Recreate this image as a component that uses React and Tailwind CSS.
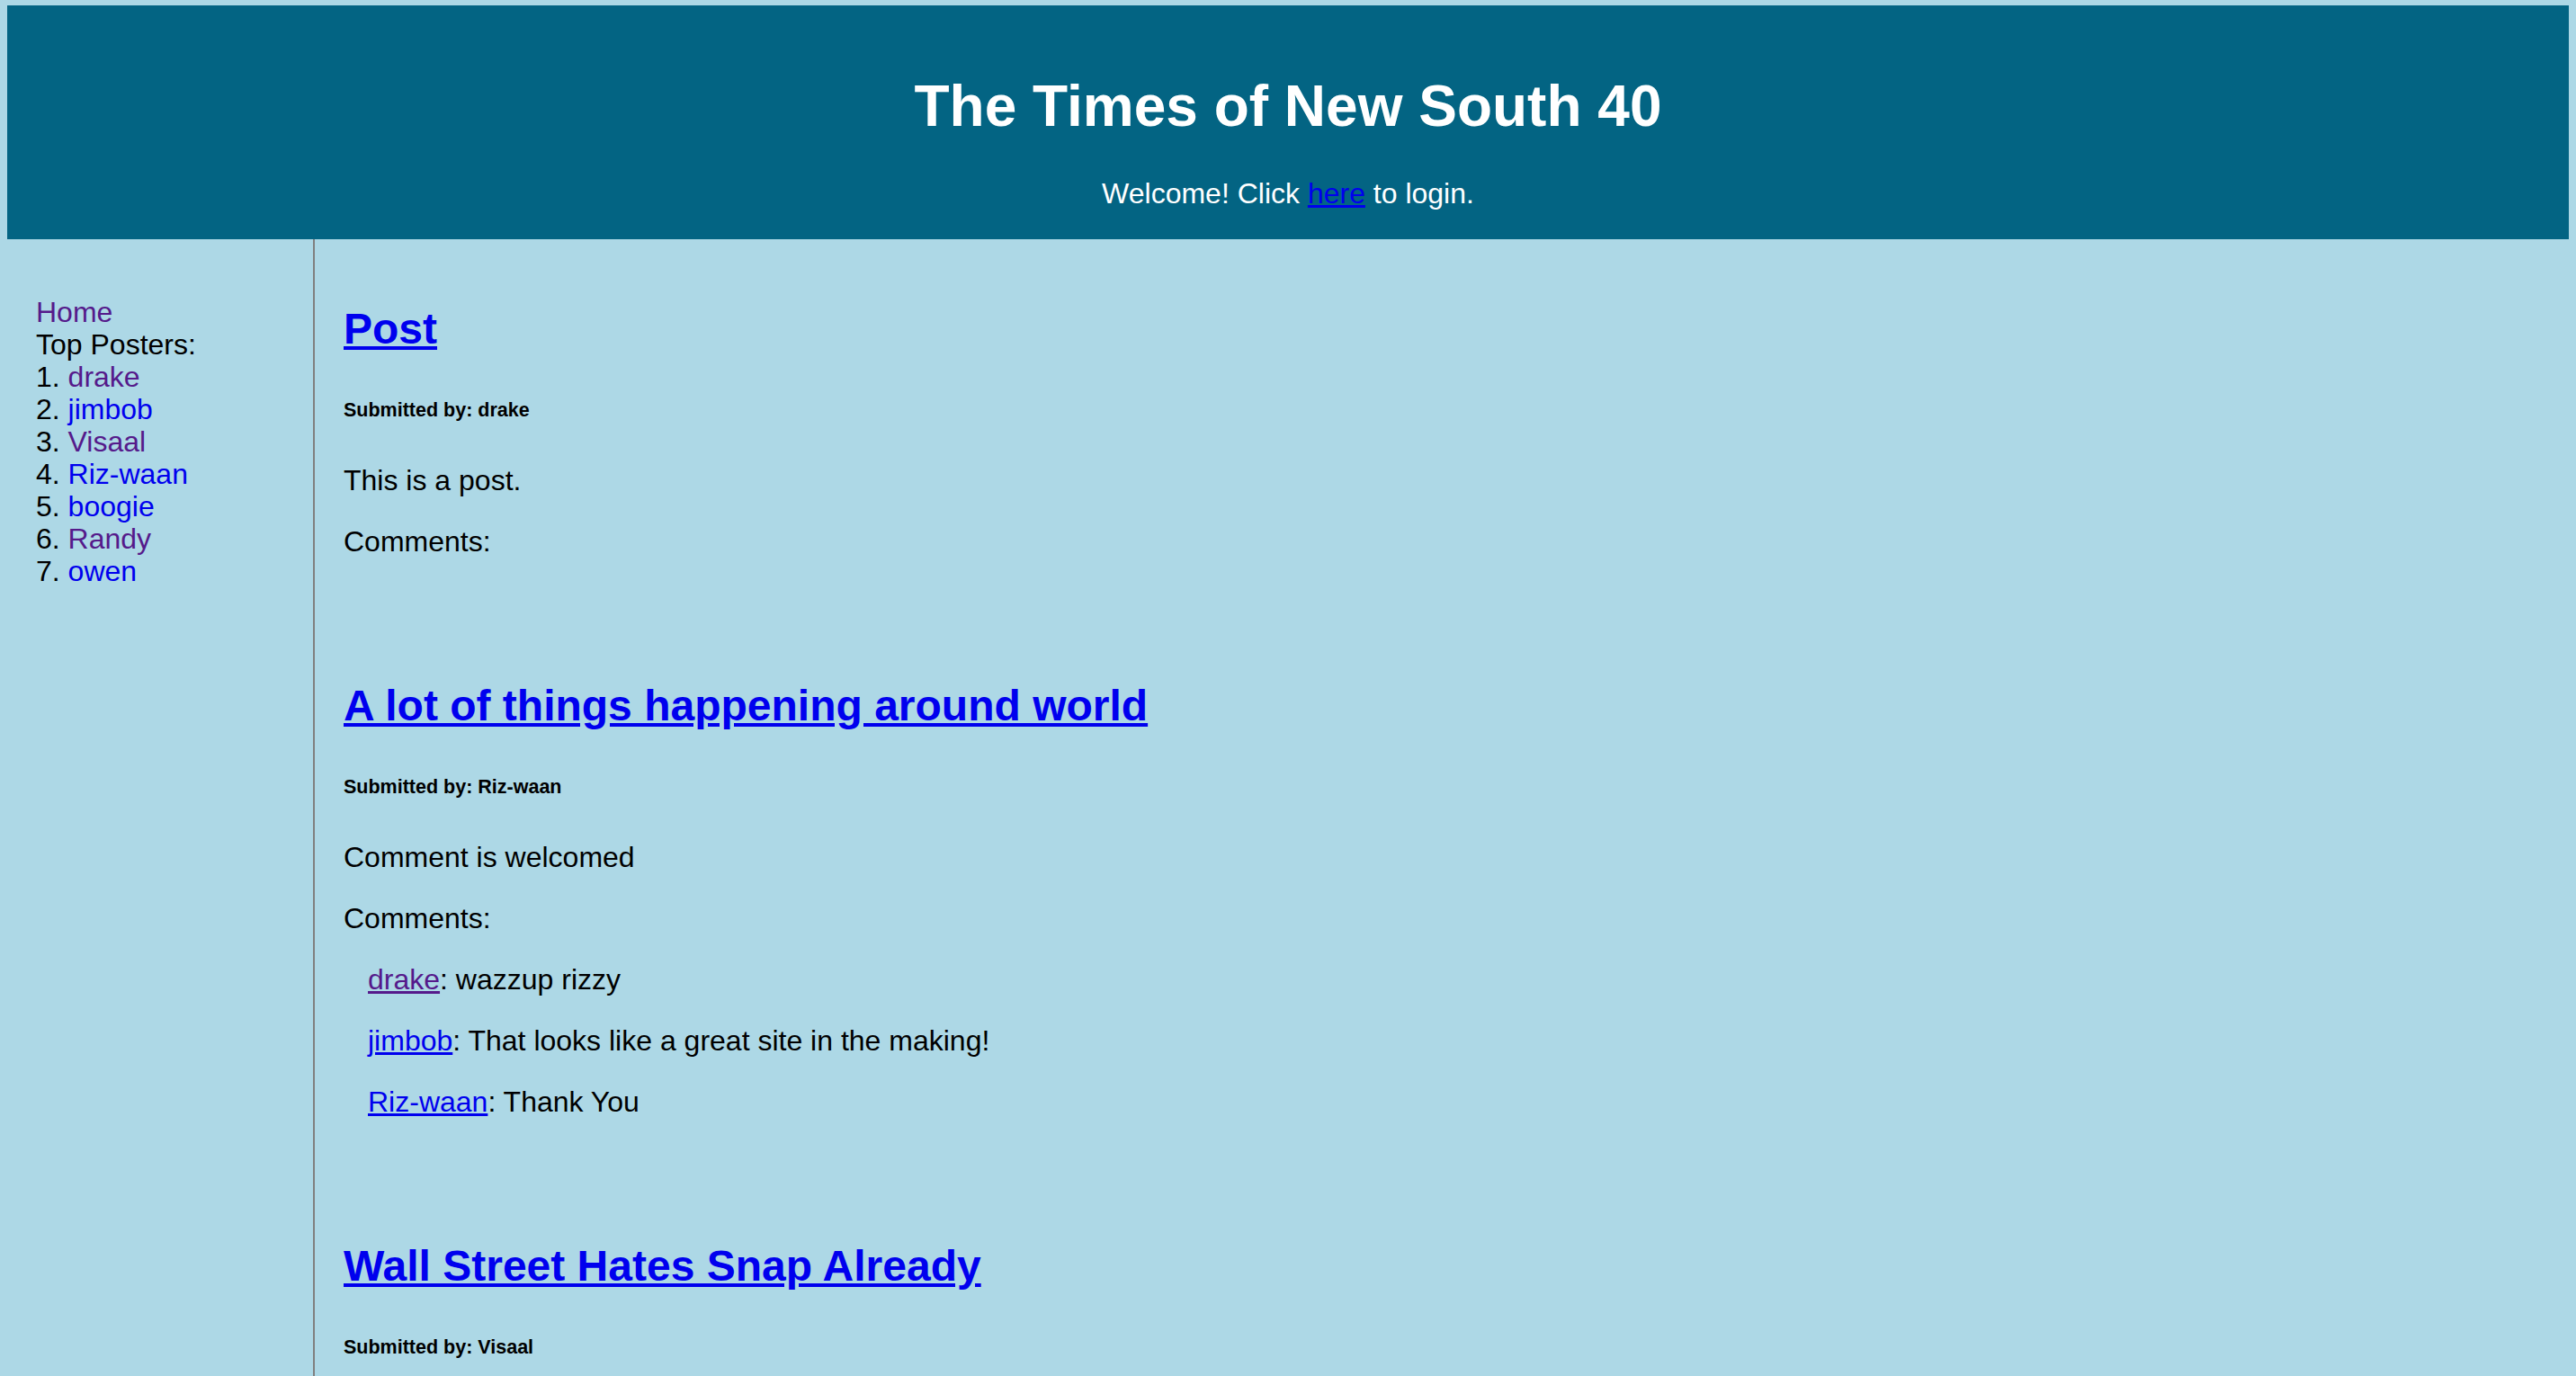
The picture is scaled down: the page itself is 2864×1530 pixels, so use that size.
import React from "react";

const posters = [
  { name: "drake", visited: true },
  { name: "jimbob", visited: false },
  { name: "Visaal", visited: true },
  { name: "Riz-waan", visited: false },
  { name: "boogie", visited: false },
  { name: "Randy", visited: true },
  { name: "owen", visited: false },
];

function PostTitle({ children }) {
  return (
    <h2 className="text-[48px] leading-[56px] font-bold">
      <a href="#" className="text-[#0000ee] underline">
        {children}
      </a>
    </h2>
  );
}

function Submitted({ by }) {
  return (
    <h6 className="mt-[50px] text-[21.5px] leading-[25px] font-bold text-black">
      Submitted by: {by}
    </h6>
  );
}

function Para({ children, className = "" }) {
  return (
    <p className={"text-[32px] leading-[37px] text-black " + className}>
      {children}
    </p>
  );
}

function Comment({ user, visited, text }) {
  return (
    <Para className="mt-[31px] pl-[27px]">
      <a
        href="#"
        className={
          "underline " + (visited ? "text-[#551a8b]" : "text-[#0000ee]")
        }
      >
        {user}
      </a>
      : {text}
    </Para>
  );
}

export default function App() {
  return (
    <div
      className="min-h-[1530px] bg-[#add8e6] pt-[6px] overflow-hidden"
      style={{ fontFamily: '"Liberation Sans", Arial, Helvetica, sans-serif' }}
    >
      <header className="mx-[8px] bg-[#036483] pt-[75px] pb-[32px] text-center text-white">
        <h1 className="text-[64px] leading-[74px] font-bold">
          The Times of New South 40
        </h1>
        <p className="mt-[42px] text-[32px] leading-[37px]">
          Welcome! Click{" "}
          <a href="#" className="text-[#0000ee] underline">
            here
          </a>{" "}
          to login.
        </p>
      </header>

      <div className="flex min-h-[1264px]">
        <aside className="w-[350px] shrink-0 border-r-2 border-[#808080] pl-[40px] pt-[63px] text-[32px] leading-[36px] text-black">
          <a href="#" className="block text-[#551a8b]">
            Home
          </a>
          <div>Top Posters:</div>
          {posters.map((p, i) => (
            <div key={p.name}>
              {i + 1}.{" "}
              <a
                href="#"
                className={p.visited ? "text-[#551a8b]" : "text-[#0000ee]"}
              >
                {p.name}
              </a>
            </div>
          ))}
        </aside>

        <main className="flex-1 pl-[32px] pt-[72px]">
          <article>
            <PostTitle>Post</PostTitle>
            <Submitted by="drake" />
            <Para className="mt-[47px]">This is a post.</Para>
            <Para className="mt-[31px]">Comments:</Para>
          </article>

          <article className="mt-[136px]">
            <PostTitle>A lot of things happening around world</PostTitle>
            <Submitted by="Riz-waan" />
            <Para className="mt-[47px]">Comment is welcomed</Para>
            <Para className="mt-[31px]">Comments:</Para>
            <Comment user="drake" visited text="wazzup rizzy" />
            <Comment
              user="jimbob"
              text="That looks like a great site in the making!"
            />
            <Comment user="Riz-waan" text="Thank You" />
          </article>

          <article className="mt-[136px]">
            <PostTitle>Wall Street Hates Snap Already</PostTitle>
            <Submitted by="Visaal" />
          </article>
        </main>
      </div>
    </div>
  );
}
